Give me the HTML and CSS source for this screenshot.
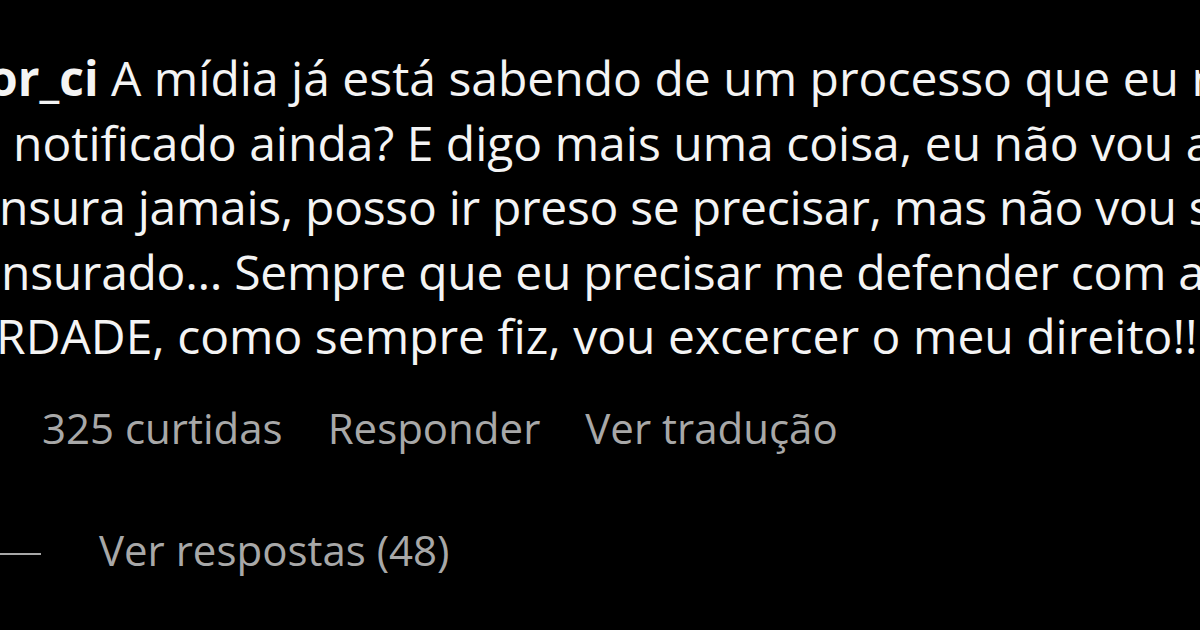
FILE: index.html
```html
<!DOCTYPE html>
<html lang="pt-BR">
<head>
    <meta charset="UTF-8">
    <meta name="viewport" content="width=device-width, initial-scale=1.0">
    <title>Comentário</title>
    <link rel="stylesheet" href="styles.css">
</head>
<body>
    <div class="comment">
        <p class="comment-text">
            <span class="line l1"><strong class="user">or_ci</strong> A mídia já está sabendo de um processo que eu n</span>
            <span class="line l2">notificado ainda? E digo mais uma coisa, eu não vou a</span>
            <span class="line l3">nsura jamais, posso ir preso se precisar, mas não vou s</span>
            <span class="line l4">nsurado... Sempre que eu precisar me defender com a</span>
            <span class="line l5">RDADE, como sempre fiz, vou excercer o meu direito!!</span>
        </p>
        <div class="actions">
            <span>325 curtidas</span>
            <span>Responder</span>
            <span>Ver tradução</span>
        </div>
        <div class="replies">
            <span class="replies-line"></span>
            <span>Ver respostas (48)</span>
        </div>
    </div>
</body>
</html>
```

FILE: styles.css
```css
body { margin: 0; background: #000; overflow: hidden; height: 630px; font-family: "Open Sans", "Noto Sans", sans-serif; }
.comment { padding-top: 46px; }
.comment-text { margin: 0; color: #f4f4f4; font-size: 48px; line-height: 64.5px; }
.line { display: block; white-space: nowrap; }
.user { font-weight: 700; }
.l1 { margin-left: -12px; }
.l2 { margin-left: 13px; }
.l3 { margin-left: -1px; letter-spacing: -0.3px; }
.l4 { margin-left: 1px; letter-spacing: -0.3px; }
.l5 { margin-left: -4px; }
.actions { display: flex; gap: 45px; margin: 34px 0 0 42px; color: #a8a8a8; font-size: 42px; line-height: 50px; }
.replies { display: flex; align-items: center; gap: 58px; margin-top: 72px; color: #a8a8a8; font-size: 42px; line-height: 50px; }
.replies-line { width: 41px; height: 2px; margin-top: 8px; background: #a8a8a8; }
```
